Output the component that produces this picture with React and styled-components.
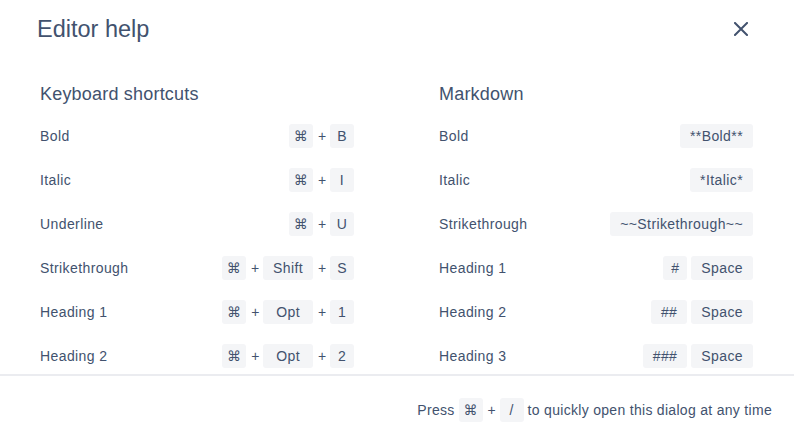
import styled, { createGlobalStyle } from "styled-components";

const GlobalStyle = createGlobalStyle`
  html, body {
    margin: 0;
    padding: 0;
    background: #ffffff;
  }
  body {
    font-family: "Liberation Sans", "DejaVu Sans", sans-serif;
    color: #42526e;
  }
`;

const Dialog = styled.div`
  width: 794px;
  height: 444px;
  display: flex;
  flex-direction: column;
  background: #ffffff;
  overflow: hidden;
`;

const Header = styled.div`
  height: 60px;
  flex-shrink: 0;
  box-sizing: border-box;
  padding: 15px 41px 0 37px;
  display: flex;
  justify-content: space-between;
  align-items: flex-start;
`;

const Title = styled.h1`
  margin: 0;
  font-size: 23.5px;
  font-weight: 400;
  line-height: 29px;
  color: #42526e;
`;

const CloseButton = styled.button`
  width: 24px;
  height: 24px;
  margin-top: 2px;
  padding: 0;
  border: none;
  background: transparent;
  display: flex;
  align-items: center;
  justify-content: center;
  color: #42526e;
  cursor: pointer;
`;

const Body = styled.div`
  flex: 1;
  overflow: hidden;
  padding: 22px 41px 0 40px;
  display: grid;
  grid-template-columns: 314px 314px;
  column-gap: 85px;
  border-bottom: 2px solid #ebecf0;
`;

const Column = styled.div`
  display: flex;
  flex-direction: column;
`;

const ColumnTitle = styled.h2`
  margin: 0 0 8px;
  font-size: 18px;
  font-weight: 400;
  line-height: 24px;
  letter-spacing: 0.2px;
  color: #42526e;
`;

const Row = styled.div`
  height: 44px;
  flex-shrink: 0;
  display: flex;
  align-items: center;
  justify-content: space-between;
  font-size: 14px;
  letter-spacing: 0.4px;
`;

const Label = styled.span`
  color: #42526e;
`;

const Combo = styled.span`
  display: inline-flex;
  align-items: center;
  gap: ${(p) => (p.$tight ? "4px" : "5px")};
`;

const Key = styled.span`
  min-width: 24px;
  height: 24px;
  box-sizing: border-box;
  padding: 0 ${(p) => (p.$single ? "0" : p.$wide ? "13px" : "10px")};
  display: inline-flex;
  align-items: center;
  justify-content: center;
  background: #f4f5f7;
  border-radius: 3px;
  font-size: 14px;
  letter-spacing: 0.4px;
  color: #42526e;
`;

const Plus = styled.span`
  font-size: 14px;
  color: #42526e;
  width: 7px;
  text-align: center;
`;

const Footer = styled.div`
  height: 68px;
  flex-shrink: 0;
  display: flex;
  align-items: center;
  justify-content: flex-end;
  padding-right: 22px;
  font-size: 14px;
  letter-spacing: 0.3px;
  gap: 4px;
`;

const CloseIcon = () => (
  <svg width="14" height="14" viewBox="0 0 14 14" fill="none">
    <path d="M1 1L13 13M13 1L1 13" stroke="currentColor" strokeWidth="2" strokeLinecap="square" />
  </svg>
);

const KeyCap = ({ k }) => (
  <Key $single={k.length === 1} $wide={k === "Opt"}>
    {k}
  </Key>
);

const renderKeys = (keys) =>
  keys.map((k, i) => (
    <span key={i} style={{ display: "contents" }}>
      {i > 0 && <Plus>+</Plus>}
      <KeyCap k={k} />
    </span>
  ));

const shortcuts = [
  { label: "Bold", keys: ["⌘", "B"] },
  { label: "Italic", keys: ["⌘", "I"] },
  { label: "Underline", keys: ["⌘", "U"] },
  { label: "Strikethrough", keys: ["⌘", "Shift", "S"] },
  { label: "Heading 1", keys: ["⌘", "Opt", "1"] },
  { label: "Heading 2", keys: ["⌘", "Opt", "2"] },
];

const markdown = [
  { label: "Bold", keys: ["**Bold**"] },
  { label: "Italic", keys: ["*Italic*"] },
  { label: "Strikethrough", keys: ["~~Strikethrough~~"] },
  { label: "Heading 1", keys: ["#", "Space"] },
  { label: "Heading 2", keys: ["##", "Space"] },
  { label: "Heading 3", keys: ["###", "Space"] },
];

export default function App() {
  return (
    <>
      <GlobalStyle />
      <Dialog>
        <Header>
          <Title>Editor help</Title>
          <CloseButton aria-label="Close">
            <CloseIcon />
          </CloseButton>
        </Header>
        <Body>
          <Column>
            <ColumnTitle>Keyboard shortcuts</ColumnTitle>
            {shortcuts.map((s) => (
              <Row key={s.label}>
                <Label>{s.label}</Label>
                <Combo>{renderKeys(s.keys)}</Combo>
              </Row>
            ))}
          </Column>
          <Column>
            <ColumnTitle>Markdown</ColumnTitle>
            {markdown.map((m) => (
              <Row key={m.label}>
                <Label>{m.label}</Label>
                <Combo $tight>
                  {m.keys.map((k) => (
                    <KeyCap key={k} k={k} />
                  ))}
                </Combo>
              </Row>
            ))}
          </Column>
        </Body>
        <Footer>
          <span>Press</span>
          <Combo>{renderKeys(["⌘", "/"])}</Combo>
          <span>to quickly open this dialog at any time</span>
        </Footer>
      </Dialog>
    </>
  );
}
